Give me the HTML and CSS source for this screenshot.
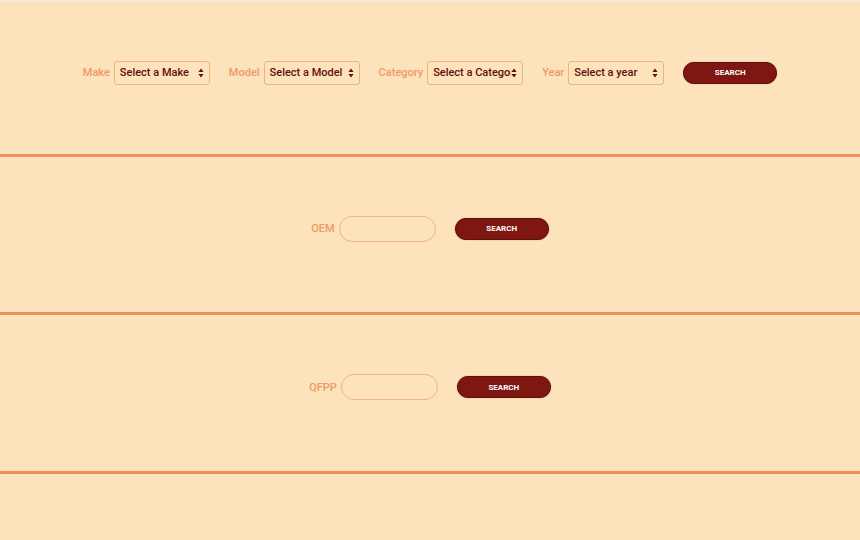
FILE: index.html
```html
<!DOCTYPE html>
<html>
<head>
<meta charset="utf-8">
<link rel="stylesheet" href="styles.css">
</head>
<body>
<div class="page">
  <section class="panel panel-first">
    <form class="row">
      <label class="field">
        <span class="label">Make</span>
        <select class="select"><option>Select a Make</option></select>
      </label>
      <label class="field">
        <span class="label">Model</span>
        <select class="select"><option>Select a Model</option></select>
      </label>
      <label class="field">
        <span class="label">Category</span>
        <select class="select"><option>Select a Category</option></select>
      </label>
      <label class="field">
        <span class="label">Year</span>
        <select class="select"><option>Select a year</option></select>
      </label>
      <button type="button" class="btn">SEARCH</button>
    </form>
  </section>
  <section class="panel panel-second">
    <form class="row">
      <label class="field">
        <span class="label">OEM</span>
        <input class="input" type="text">
      </label>
      <button type="button" class="btn">SEARCH</button>
    </form>
  </section>
  <section class="panel panel-third">
    <form class="row">
      <label class="field">
        <span class="label">QFPP</span>
        <input class="input" type="text">
      </label>
      <button type="button" class="btn">SEARCH</button>
    </form>
  </section>
  <section class="panel panel-last"></section>
</div>
</body>
</html>
```
FILE: styles.css
```css
html, body {
  margin: 0;
  padding: 0;
  background: #fce3bb;
}
body {
  font-family: Roboto, "Liberation Sans", sans-serif;
  width: 860px;
  height: 540px;
  overflow: hidden;
}
.page {
  border-top: 1px solid #ececec;
}
.panel {
  display: flex;
  align-items: center;
  justify-content: center;
  border-bottom: 3px solid #ee9159;
  box-sizing: border-box;
}
.panel-first {
  height: 156px;
  padding-bottom: 10px;
}
.panel-second {
  height: 158px;
  padding-bottom: 12px;
}
.panel-third {
  height: 159px;
  padding-bottom: 12px;
}
.panel-last {
  border-bottom: none;
  height: 80px;
}
.row {
  display: flex;
  align-items: center;
  gap: 19px;
  margin: 0;
}
.field {
  display: flex;
  align-items: center;
  gap: 4px;
}
.label {
  color: #ee9a62;
  font-size: 11px;
  font-weight: 500;
}
.select {
  appearance: none;
  -webkit-appearance: none;
  width: 96px;
  height: 24px;
  box-sizing: border-box;
  border: 1px solid #f0b47f;
  border-radius: 3px;
  background-color: #fce3bb;
  background-image: url("data:image/svg+xml;utf8,<svg xmlns='http://www.w3.org/2000/svg' width='6' height='10' viewBox='0 0 6 10'><path d='M3 0.5 L5.6 4 H0.4 Z M3 9.5 L5.6 6 H0.4 Z' fill='%23650e0a'/></svg>");
  background-repeat: no-repeat;
  background-position: right 5px center;
  padding: 0 11px 0 5px;
  color: #650e0a;
  font-family: Roboto, "Liberation Sans", sans-serif;
  font-size: 11px;
  font-weight: 500;
  outline: none;
}
.input {
  width: 97px;
  height: 26px;
  box-sizing: border-box;
  border: 1px solid #f0b47f;
  border-radius: 13px;
  background: #fce3bb;
  outline: none;
  padding: 0 10px;
}
.btn {
  width: 94px;
  height: 22px;
  border: 1px solid #5e0f0b;
  border-radius: 11px;
  background: #7e1711;
  color: #ffffff;
  font-family: Roboto, "Liberation Sans", sans-serif;
  font-size: 8px;
  font-weight: 700;
  padding: 0;
  box-shadow: 0 0 1px rgba(80, 10, 10, 0.6);
}
```
